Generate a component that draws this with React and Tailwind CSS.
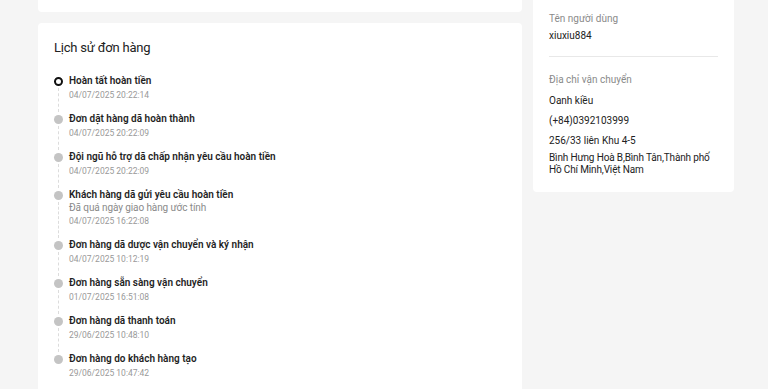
const history = [
    { title: 'Hoàn tất hoàn tiền', time: '04/07/2025 20:22:14', active: true },
    { title: 'Đơn dặt hàng dã hoàn thành', time: '04/07/2025 20:22:09' },
    { title: 'Đội ngũ hỗ trợ dã chấp nhận yêu cầu hoàn tiền', time: '04/07/2025 20:22:09' },
    { title: 'Khách hàng dã gửi yêu cầu hoàn tiền', note: 'Đã quá ngày giao hàng ước tính', time: '04/07/2025 16:22:08' },
    { title: 'Đơn hàng dã dược vận chuyển và ký nhận', time: '04/07/2025 10:12:19' },
    { title: 'Đơn hàng sẵn sàng vận chuyển', time: '01/07/2025 16:51:08' },
    { title: 'Đơn hàng dã thanh toán', time: '29/06/2025 10:48:10' },
    { title: 'Đơn hàng do khách hàng tạo', time: '29/06/2025 10:47:42' },
];

const HistoryItem = ({ item, last }) => (
    <div className="flex gap-[6px]">
        <div className="flex w-[9px] flex-col items-center">
            {item.active ? (
                <span className="mt-[3px] h-[9px] w-[9px] shrink-0 rounded-full border-2 border-[#111]" />
            ) : (
                <span className="mt-[3px] h-[9px] w-[9px] shrink-0 rounded-full bg-[#c4c4c4]" />
            )}
            {!last && <span className="mt-[2px] w-0 flex-1 border-l border-dashed border-[#dcdcdc]" />}
        </div>
        <div className="flex flex-col pb-[10px]">
            <span className="text-[10px] leading-[14px] font-semibold text-[#1f1f1f]">{item.title}</span>
            {item.note && <span className="text-[10px] leading-[12px] tracking-[-0.1px] text-[#8a8a8a]">{item.note}</span>}
            <span className="text-[8.5px] leading-[14px] text-[#999]">{item.time}</span>
        </div>
    </div>
);

export default function App() {
    return (
        <div className="flex h-[389px] w-[768px] gap-[11px] overflow-hidden bg-[#f5f5f5] pl-[38px] font-['Roboto',sans-serif]">
            <div className="flex h-[389px] w-[484px] flex-col gap-[11px]">
                <div className="h-[12px] shrink-0 rounded-b-[4px] bg-white" />
                <div className="min-h-0 flex-1 overflow-hidden rounded-t-[4px] bg-white px-[16px] pt-[15px]">
                    <h2 className="text-[13px] leading-[20px] tracking-[-0.2px] text-[#222]">Lịch sử đơn hàng</h2>
                    <div className="mt-[16px] flex flex-col">
                        {history.map((item, i) => (
                            <HistoryItem key={i} item={item} last={i === history.length - 1} />
                        ))}
                    </div>
                </div>
            </div>
            <div className="self-start w-[201px] rounded-b-[4px] bg-white px-[16px] pt-[12px] pb-[16px]">
                <div className="text-[10px] leading-[14px] text-[#8a8a8a]">Tên người dùng</div>
                <div className="mt-[3px] text-[10px] leading-[14px] text-[#222]">xiuxiu884</div>
                <div className="mt-[13px] border-t border-[#e8e8e8]" />
                <div className="mt-[16px] text-[10px] leading-[14px] text-[#8a8a8a]">Địa chỉ vận chuyển</div>
                <div className="mt-[7px] text-[10px] leading-[14px] text-[#222]">Oanh kiều</div>
                <div className="mt-[6px] text-[10px] leading-[14px] text-[#222]">(+84)0392103999</div>
                <div className="mt-[6px] text-[10px] leading-[14px] text-[#222]">256/33 liên Khu 4-5</div>
                <div className="mt-[4px] text-[10px] leading-[12px] tracking-[-0.15px] text-[#222]">
                    Bình Hưng Hoà B,Bình Tân,Thành phố Hồ Chí Minh,Việt Nam
                </div>
            </div>
        </div>
    );
}
